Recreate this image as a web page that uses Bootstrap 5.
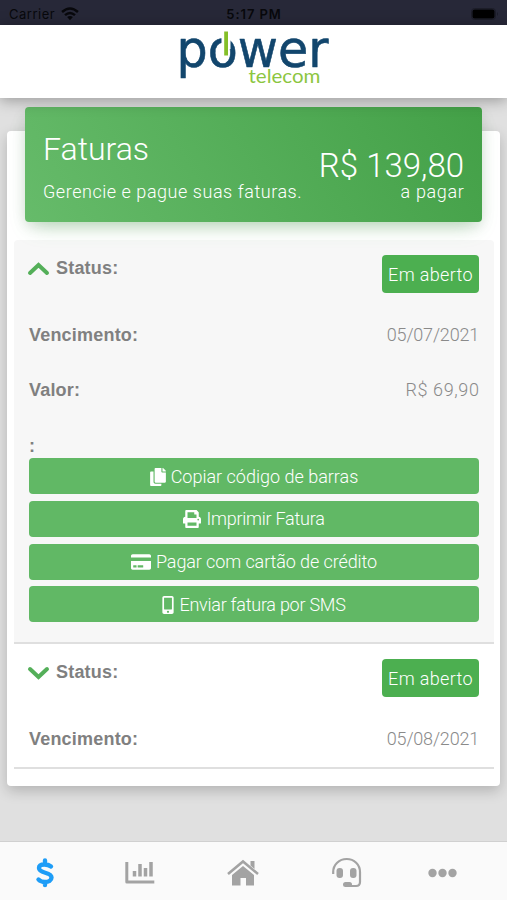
<!DOCTYPE html>
<html lang="pt-BR">
<head>
<meta charset="utf-8">
<meta name="viewport" content="width=device-width, initial-scale=1">
<title>Power Telecom - Faturas</title>
<link href="https://cdn.jsdelivr.net/npm/bootstrap@5.3.0/dist/css/bootstrap.min.css" rel="stylesheet">
<style>
body{background:#e0e0e0;font-family:Roboto,"Liberation Sans",sans-serif;font-weight:300;font-size:18px;line-height:24px;color:#8a8a8a;height:900px;overflow:hidden}
svg{display:block;flex:none}
.status-strip{height:25px;background:#272838;color:#08080c;font:400 13px/18px Inter,sans-serif;padding:2px 8px 0 9px}
.status-strip>div{flex:1 1 0}
.carrier{letter-spacing:.5px}
.wifi{margin-left:6px}
.clock{font-weight:600;letter-spacing:.9px;padding-top:3px}
.brand-bar{height:73px;box-shadow:0 2px 14px rgba(0,0,0,.34);z-index:2}
.content{padding:9px 7px 0}
.panel{display:flow-root;margin-top:24px;height:655px;padding:0 6px 0 7px;border-radius:4px;box-shadow:0 5px 14px rgba(0,0,0,.2)}
.hero{height:115px;margin:-24px 12px 18px 11px;padding:0 18px;border-radius:4px;color:#fff;background:linear-gradient(60deg,#66bb6a,#43a047);box-shadow:0 10px 20px -8px rgba(76,175,80,.4),0 4px 14px rgba(0,0,0,.1)}
.hero-title{font-size:32px;line-height:40px;padding-top:22px}
.hero-sub{line-height:24px;padding-top:11px;letter-spacing:.54px}
.hero-sum{font-size:33px;line-height:34px;padding-top:42px}
.hero-due{line-height:20px;margin-top:-1px;letter-spacing:.65px;margin-right:-.5px}
.invoice{padding:0 15px;border-bottom:2px solid #dfdfdf}
.invoice-open{background:#f7f7f7;height:404px;border-radius:4px 4px 0 0}
.head-row{height:67.500px;padding-top:15px}
.head-row .key{padding-top:1px}
.line-row{height:55px}
.tag-row{height:40.500px;padding-top:16px}
.key{font-family:"Liberation Sans",Arial,sans-serif;font-weight:700;color:#808080;font-size:18px;letter-spacing:.2px}
.when{letter-spacing:-.2px}
.amount{letter-spacing:.6px;margin-right:-.5px}
.state{width:97px;height:38px;line-height:39px;border-radius:4px;background:#4caf50;color:#fff;white-space:nowrap;letter-spacing:.35px}
.btn-action{height:36px;padding:1px 0 0;border:0;border-radius:4px;background:#61b865;color:#fff;font-size:18px;line-height:36px;font-weight:300;white-space:nowrap;gap:5px}
.tight{letter-spacing:-.25px}
.snug{letter-spacing:-.1px}
.btn-stack{gap:6.8px}
.tabs{height:59px;background:#fafafa;border-top:1px solid #d0d0d0;color:#a3a3a3;padding-top:3px}
</style>
<script src="https://cdn.jsdelivr.net/npm/bootstrap@5.3.0/dist/js/bootstrap.bundle.min.js"></script>
</head>
<body class="d-flex flex-column">
<div class="status-strip d-flex">
  <div class="d-flex align-items-center"><span class="carrier">Carrier</span>
    <svg class="wifi" width="18" height="14" viewBox="0 0 17 13" fill="none" stroke="#08080c" stroke-width="2.3"><path d="M1 4.6Q8.5-2 16 4.6M3.8 7.6Q8.5 3.4 13.2 7.6"/><path d="M5.8 9.4Q8.5 7.2 11.2 9.4L8.5 12.4Z" fill="#08080c" stroke="none"/></svg>
  </div>
  <div class="clock text-center">5:17 PM</div>
  <div class="d-flex align-items-center justify-content-end"><svg width="28" height="12" viewBox="0 0 28 12"><rect x=".5" y=".5" width="24" height="11" rx="3" fill="none" stroke="#1c1d28"/><rect x="1.500" y="1.500" width="22" height="9" rx="2" fill="#000"/><path d="M26 4v4q2-2 0-4" fill="#1c1d28"/></svg></div>
</div>
<header class="brand-bar bg-white position-relative d-flex justify-content-center">
  <svg width="155" height="66" viewBox="176 25 155 66" overflow="visible" role="img" aria-label="Power Telecom">
    <text x="176.500" y="67" font-family="DejaVu Sans" font-weight="400" font-size="51" textLength="152" lengthAdjust="spacingAndGlyphs" fill="#12466d" stroke="#12466d" stroke-width=".6" stroke-linejoin="round">power</text>
    <path d="M221.500 34h9v15h-9z" fill="#fff"/><path d="M224.200 31.500h3.800v24h-3.800z" fill="#84bf28"/>
    <text x="248.500" y="83" font-family="Lato" font-weight="400" font-size="20" textLength="72" lengthAdjust="spacingAndGlyphs" fill="#8cc63f">telecom</text>
  </svg>
</header>
<main class="content flex-grow-1">
  <section class="panel bg-white">
    <div class="hero d-flex justify-content-between position-relative">
      <div><div class="hero-title">Faturas</div><div class="hero-sub">Gerencie e pague suas faturas.</div></div>
      <div class="text-end"><div class="hero-sum">R$ 139,80</div><div class="hero-due">a pagar</div></div>
    </div>
    <article class="invoice invoice-open">
      <div class="head-row d-flex justify-content-between align-items-start">
        <div class="d-flex align-items-center key"><svg class="me-2" width="19" height="14" viewBox="0 0 19 14" fill="none" stroke="#54af59" stroke-width="4" stroke-linecap="round" overflow="visible"><path d="M1 12 9.500 4l8.500 8"/></svg>Status:</div>
        <div class="state text-center">Em aberto</div>
      </div>
      <div class="line-row d-flex justify-content-between align-items-center"><span class="key">Vencimento:</span><span class="when">05/07/2021</span></div>
      <div class="line-row d-flex justify-content-between align-items-center"><span class="key">Valor:</span><span class="amount">R$ 69,90</span></div>
      <div class="tag-row key">:</div>
      <div class="btn-stack d-flex flex-column">
        <button class="btn btn-action w-100 d-flex justify-content-center align-items-center"><svg width="16" height="18" viewBox="0 0 448 512" fill="currentColor"><path d="M320 448v40c0 13-11 24-24 24H24c-13 0-24-11-24-24V120c0-13 11-24 24-24h72v296c0 31 25 56 56 56zm0-344V0H152c-13 0-24 11-24 24v368c0 13 11 24 24 24h272c13 0 24-11 24-24V128H344c-13 0-24-11-24-24zm121-31L375 7c-4-4-11-7-17-7h-6v96h96v-6c0-6-3-12-7-17z"/></svg><span>Copiar código de barras</span></button>
        <button class="btn btn-action w-100 d-flex justify-content-center align-items-center"><svg width="18" height="18" viewBox="0 0 512 512" fill="currentColor"><path d="M448 192V77c0-8-3-16-9-22L393 9c-6-6-14-9-22-9H96C78 0 64 14 64 32v160c-35 0-64 29-64 64v112c0 9 7 16 16 16h48v96c0 18 14 32 32 32h320c18 0 32-14 32-32v-96h48c9 0 16-7 16-16V256c0-35-29-64-64-64zm-64 256H128v-96h256zm0-224H128V64h192v48c0 9 7 16 16 16h48zm48 72a24 24 0 1 1 0-48 24 24 0 0 1 0 48z"/></svg><span class="tight">Imprimir Fatura</span></button>
        <button class="btn btn-action w-100 d-flex justify-content-center align-items-center"><svg width="20" height="18" viewBox="0 0 576 512" fill="currentColor"><path d="M0 432c0 27 22 48 48 48h480c27 0 48-21 48-48V224H0zm192-68c0-7 5-12 12-12h136c7 0 12 5 12 12v40c0 7-5 12-12 12H204c-7 0-12-5-12-12zm-128 0c0-7 5-12 12-12h72c7 0 12 5 12 12v40c0 7-5 12-12 12H76c-7 0-12-5-12-12zM576 80v48H0V80c0-27 22-48 48-48h480c27 0 48 21 48 48z"/></svg><span class="snug">Pagar com cartão de crédito</span></button>
        <button class="btn btn-action w-100 d-flex justify-content-center align-items-center"><svg width="12" height="18" viewBox="0 0 320 512" fill="currentColor"><path d="M272 0H48C22 0 0 22 0 48v416c0 27 22 48 48 48h224c27 0 48-21 48-48V48c0-26-21-48-48-48zM160 480a32 32 0 1 1 0-64 32 32 0 0 1 0 64zm112-108c0 7-5 12-12 12H60c-7 0-12-5-12-12V60c0-7 5-12 12-12h200c7 0 12 5 12 12z"/></svg><span class="tight">Enviar fatura por SMS</span></button>
      </div>
    </article>
    <article class="invoice">
      <div class="head-row d-flex justify-content-between align-items-start">
        <div class="d-flex align-items-center key"><svg class="me-2" width="19" height="14" viewBox="0 0 19 14" fill="none" stroke="#54af59" stroke-width="4" stroke-linecap="round" overflow="visible"><path d="m1 4 8.500 8L18 4"/></svg>Status:</div>
        <div class="state text-center">Em aberto</div>
      </div>
      <div class="line-row d-flex justify-content-between align-items-center"><span class="key">Vencimento:</span><span class="when">05/08/2021</span></div>
    </article>
  </section>
</main>
<nav class="tabs d-flex">
  <svg width="507" height="55" viewBox="0 845 507 55" fill="currentColor" stroke="none">
    <path d="M51 866.500Q48.500 864.500 44.500 864.500 39 864.500 39 868c0 6 12.500 3.500 12.500 9.500 0 3-3 4.500-6.500 4.500-3 0-5-1-6.500-2.500M45 860.500v3.500M45 882v3" fill="none" stroke="#1e9df7" stroke-width="4.400" stroke-linecap="round"/>
    <path d="M126.800 862v20h27.500" fill="none" stroke="currentColor" stroke-width="3" stroke-linejoin="round"/><path d="M134.500 871v5.500M140 864v12.500M145.500 868v8.500M151 862v14.500" stroke="currentColor" stroke-width="3.500"/>
    <path d="m228 874 15-12.500 15 12.500" fill="none" stroke="currentColor" stroke-width="2.600"/><path d="M250.500 861h4v8l-4-3.500zM232 875l11-9 11 9v10.500h-8v-7.500h-5.500v7.500H232z"/>
    <path d="M333.200 874v-2c0-7.500 6-13 13.500-13s13.300 5.500 13.300 13v10q0 4-4 4h-11" fill="none" stroke="currentColor" stroke-width="2.200"/><rect x="336.500" y="868" width="6.500" height="10" rx="3"/><rect x="350" y="868" width="6.500" height="10" rx="3"/><rect x="343" y="882" width="9" height="5" rx="2.500"/>
    <circle cx="432.500" cy="873" r="4.200"/><circle cx="442.500" cy="873" r="4.200"/><circle cx="452.500" cy="873" r="4.200"/>
  </svg>
</nav>
</body>
</html>
